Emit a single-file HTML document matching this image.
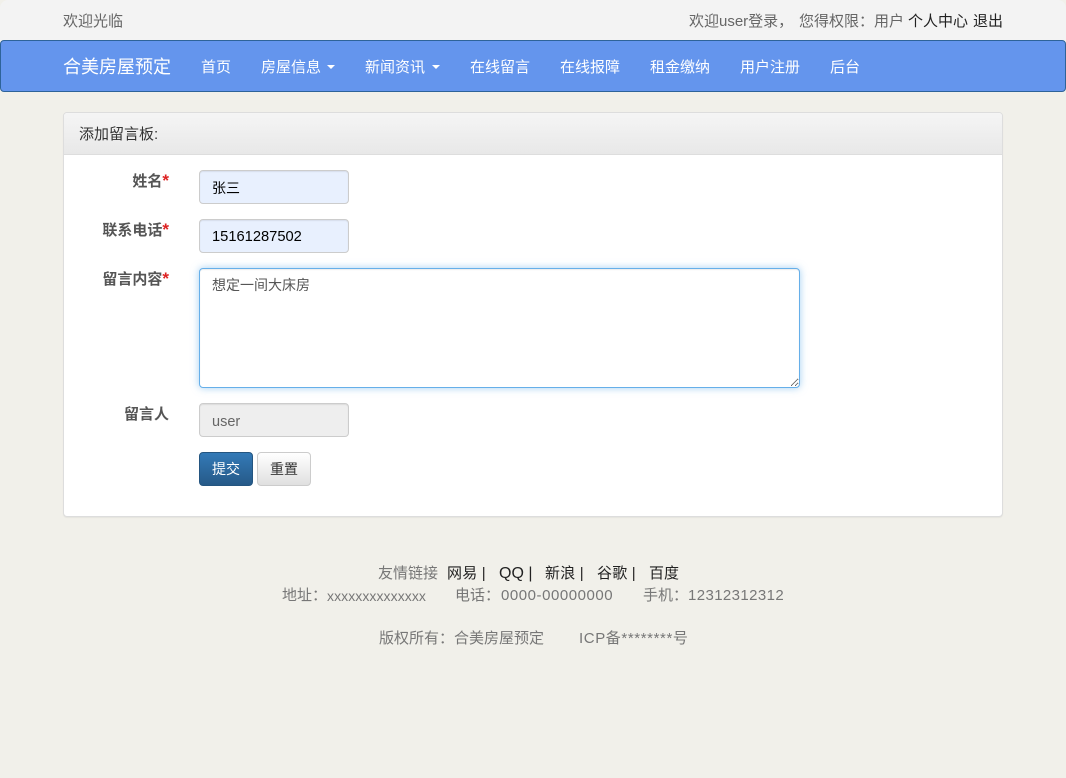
<!DOCTYPE html>
<html lang="zh-CN">
<head>
<meta charset="utf-8">
<title>合美房屋预定</title>
<style>
*{box-sizing:border-box}
html,body{margin:0;padding:0}
body{width:1066px;height:778px;position:relative;overflow:hidden;background:#f1f0ea;font-family:"Liberation Sans","Noto Sans CJK SC",sans-serif;font-size:15px;color:#666}
.a{position:absolute;white-space:nowrap;line-height:20px}
.top{position:absolute;left:0;top:0;width:1066px;height:42px;background:#f3f3f3;border-radius:8px 8px 0 0}
.nav{position:absolute;left:0;top:40px;width:1066px;height:52px;background:#6495ed;border:1px solid #2e6399;border-radius:4px}
.n{color:#fff;top:58px}
.caret{position:absolute;top:65px;width:0;height:0;border-left:4px solid transparent;border-right:4px solid transparent;border-top:4px solid #fff}
.panel{position:absolute;left:63px;top:112px;width:940px;height:405px;background:#fff;border:1px solid #ddd;border-radius:4px;box-shadow:0 1px 1px rgba(0,0,0,.05)}
.ph{position:absolute;left:0;top:0;width:938px;height:42px;background:linear-gradient(#f5f5f5,#e8e8e8);border-bottom:1px solid #ddd;border-radius:3px 3px 0 0}
.lb{font-weight:bold;color:#555;text-align:right;width:120px;left:49px}
.lb b{color:#d22;font-weight:bold;font-size:17px}
.in{position:absolute;left:199px;width:150px;height:34px;border:1px solid #ccc;border-radius:4px;background:#e8f0fe;color:#000;padding:0 12px;line-height:35px;font-size:14px;box-shadow:inset 0 1px 1px rgba(0,0,0,.075)}
textarea{position:absolute;left:199px;top:268px;width:601px;height:120px;border:1px solid #66afe9;border-radius:4px;background:#fff;color:#555;padding:6px 12px;margin:0;font:14px/20px "Liberation Sans","Noto Sans CJK SC",sans-serif;outline:0;box-shadow:inset 0 1px 1px rgba(0,0,0,.075),0 0 8px rgba(102,175,233,.6)}
.btn{position:absolute;top:452px;height:34px;border-radius:4px;text-align:center;line-height:32px;font-size:14px}
.f{color:#777}
.l{color:#222}
</style>
</head>
<body>
<div class="top"></div>
<div class="a" style="left:63px;top:12px;color:#666">欢迎光临</div>
<div class="a" style="left:689px;top:12px;color:#666">欢迎user登录，</div>
<div class="a" style="left:799px;top:12px;color:#666">您得权限：用户</div>
<div class="a l" style="left:908px;top:12px">个人中心</div>
<div class="a l" style="left:973px;top:12px">退出</div>

<div class="nav"></div>
<div class="a" style="left:63px;top:57px;color:#fff;font-size:18px">合美房屋预定</div>
<div class="a n" style="left:201px">首页</div>
<div class="a n" style="left:261px">房屋信息</div><span class="caret" style="left:327px"></span>
<div class="a n" style="left:365px">新闻资讯</div><span class="caret" style="left:432px"></span>
<div class="a n" style="left:470px">在线留言</div>
<div class="a n" style="left:560px">在线报障</div>
<div class="a n" style="left:650px">租金缴纳</div>
<div class="a n" style="left:740px">用户注册</div>
<div class="a n" style="left:830px">后台</div>

<div class="panel"><div class="ph"></div></div>
<div class="a" style="left:79px;top:125px;color:#333">添加留言板:</div>

<div class="a lb" style="top:171px">姓名<b>*</b></div>
<div class="in" style="top:170px">张三</div>
<div class="a lb" style="top:220px">联系电话<b>*</b></div>
<div class="in" style="top:219px;font-size:14.7px">15161287502</div>
<div class="a lb" style="top:269px">留言内容<b>*</b></div>
<textarea>想定一间大床房</textarea>
<div class="a lb" style="top:405px">留言人</div>
<div class="in" style="top:403px;background:#eee;color:#666;font-size:14.5px;line-height:36px">user</div>

<div class="btn" style="left:199px;width:54px;background:linear-gradient(#337ab7,#265a88);border:1px solid #245580;color:#fff">提交</div>
<div class="btn" style="left:257px;width:54px;background:linear-gradient(#fff,#e0e0e0);border:1px solid #ccc;color:#333">重置</div>

<div class="a f" style="left:378px;top:564px">友情链接</div>
<div class="a l" style="left:447px;top:564px;letter-spacing:.2px">网易 |</div>
<div class="a l" style="left:499px;top:564px;font-size:16px">QQ |</div>
<div class="a l" style="left:545px;top:564px;letter-spacing:.2px">新浪 |</div>
<div class="a l" style="left:597px;top:564px;letter-spacing:.2px">谷歌 |</div>
<div class="a l" style="left:649px;top:564px">百度</div>
<div class="a f" style="left:282px;top:586px">地址：</div>
<div class="a f" style="left:327px;top:586px;font-size:14px;letter-spacing:.07px">xxxxxxxxxxxxxx</div>
<div class="a f" style="left:455px;top:586px">电话：</div>
<div class="a f" style="left:501px;top:586px;letter-spacing:.54px">0000-00000000</div>
<div class="a f" style="left:643px;top:586px">手机：</div>
<div class="a f" style="left:688px;top:586px;letter-spacing:.39px">12312312312</div>
<div class="a f" style="left:379px;top:629px">版权所有：合美房屋预定</div>
<div class="a f" style="left:579px;top:629px;letter-spacing:.6px">ICP备********号</div>
</body>
</html>
